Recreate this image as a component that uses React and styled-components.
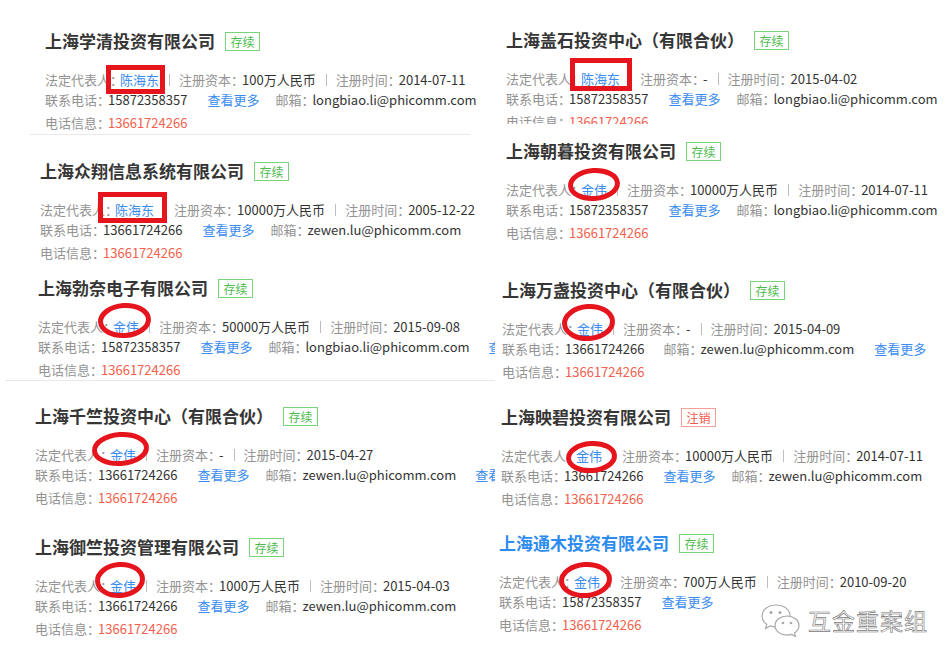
import React from "react";
import styled, { createGlobalStyle } from "styled-components";

const GlobalStyle = createGlobalStyle`
  body {
    margin: 0;
    background: #fff;
    font-family: "Noto Sans CJK SC", "Liberation Sans", sans-serif;
  }
`;

const Page = styled.div`
  position: relative;
  display: flex;
  width: 950px;
  height: 663px;
  overflow: hidden;
  background: #fff;
`;

const Column = styled.div`
  display: flex;
  flex-direction: column;
  width: ${(p) => p.$width}px;
  flex-shrink: 0;
  overflow: hidden;
`;

const Card = styled.div`
  margin-top: ${(p) => p.$top}px;
  padding-left: ${(p) => p.$x}px;
  height: ${(p) => p.$height || 104}px;
  overflow: hidden;
  flex-shrink: 0;
  white-space: nowrap;
`;

const Rule = styled.div`
  margin-top: ${(p) => p.$top}px;
  margin-left: ${(p) => p.$x}px;
  width: ${(p) => p.$w}px;
  height: 1px;
  background: #e9e9e9;
  flex-shrink: 0;
`;

const Header = styled.div`
  display: flex;
  align-items: center;
  height: 24px;
`;

const Title = styled.span`
  font-size: 17px;
  font-weight: 700;
  line-height: 24px;
  color: ${(p) => (p.$active ? "#2d8cf0" : "#363636")};
`;

const Badge = styled.span`
  margin-left: 10px;
  width: 35px;
  height: 19px;
  box-sizing: border-box;
  display: inline-flex;
  align-items: center;
  justify-content: center;
  font-size: 12px;
  color: ${(p) => (p.$closed ? "#f05a4a" : "#4cbb4c")};
  border: 1px solid ${(p) => (p.$closed ? "#f4a096" : "#78d478")};
`;

const Info = styled.div`
  margin-top: 17px;
  font-size: 13px;
  color: #333;
`;

const Row = styled.div`
  display: flex;
  align-items: center;
  height: 20px;
  line-height: 20px;
  margin-top: ${(p) => p.$gap || 0}px;
`;

const Label = styled.span`
  color: #939393;
`;

const Value = styled.span`
  margin-left: -2px;
  color: ${(p) => (p.$red ? "#f4604c" : "#333")};
`;

const Name = styled.span`
  position: relative;
  margin-left: -3px;
  color: #3b8cf0;
`;

const Sep = styled.span`
  display: inline-block;
  width: 1px;
  height: 12px;
  margin: 0 9px 0 10px;
  background: #bdbdbd;
`;

const More = styled.span`
  margin-left: ${(p) => p.$gap || 20}px;
  color: #3b8cf0;
`;

const Mail = styled.span`
  margin-left: ${(p) => p.$gap || 16}px;
`;

const Frame = styled.span`
  position: absolute;
  box-sizing: border-box;
  border: 5px solid #e5141d;
`;

const Ring = styled.svg`
  position: absolute;
  overflow: visible;
`;

const Watermark = styled.div`
  position: absolute;
  left: 760px;
  top: 603px;
  display: flex;
  align-items: center;
  gap: 6px;
`;

const WatermarkText = styled.span`
  font-size: 23px;
  letter-spacing: 1px;
  color: #fbfbfb;
  -webkit-text-stroke: 0.6px #7a7a7a;
`;

const Mark = ({ mark }) => {
  const [x, y, w, h] = mark.box;
  if (mark.type === "rect") {
    return <Frame style={{ left: x, top: y, width: w, height: h }} />;
  }
  return (
    <Ring
      style={{ left: x, top: y }}
      width={w}
      height={h}
      viewBox={`0 0 ${w} ${h}`}
    >
      <ellipse
        cx={w / 2}
        cy={h / 2}
        rx={w / 2 - 2.5}
        ry={h / 2 - 2.5}
        fill="none"
        stroke="#e5141d"
        strokeWidth="5"
        transform={`rotate(-4 ${w / 2} ${h / 2})`}
      />
    </Ring>
  );
};

const CompanyCard = ({ c }) => (
  <Card $top={c.top} $x={c.x} $height={c.height}>
    <Header>
      <Title $active={c.active}>{c.title}</Title>
      <Badge $closed={c.closed}>{c.closed ? "注销" : "存续"}</Badge>
    </Header>
    <Info>
      <Row>
        <Label>法定代表人：</Label>
        <Name>
          {c.person}
          <Mark mark={c.mark} />
        </Name>
        <Sep />
        <Label>注册资本：</Label>
        <Value>{c.capital}</Value>
        <Sep />
        <Label>注册时间：</Label>
        <Value>{c.date}</Value>
      </Row>
      <Row>
        <Label>联系电话：</Label>
        <Value>{c.phone}</Value>
        {c.order === "mail" ? (
          <>
            <Mail $gap={19}>
              <Label>邮箱：</Label>
              <Value>{c.email}</Value>
            </Mail>
            <More>查看更多</More>
          </>
        ) : (
          <>
            <More>查看更多</More>
            {c.email && (
              <Mail>
                <Label>邮箱：</Label>
                <Value>{c.email}</Value>
              </Mail>
            )}
            {c.extra && <More $gap={19}>查看更多</More>}
          </>
        )}
      </Row>
      <Row $gap={3}>
        <Label>电话信息：</Label>
        <Value $red>13661724266</Value>
      </Row>
    </Info>
  </Card>
);

const LONG = "longbiao.li@phicomm.com";
const ZEWEN = "zewen.lu@phicomm.com";

const left = [
  {
    top: 29, x: 45, title: "上海学清投资有限公司", person: "陈海东",
    mark: { type: "rect", box: [-14, -5, 59, 29] },
    capital: "100万人民币", date: "2014-07-11", phone: "15872358357", email: LONG,
  },
  {
    rule: { top: 1, x: 30, w: 440 },
    top: 24, x: 40, title: "上海众翔信息系统有限公司", person: "陈海东",
    mark: { type: "rect", box: [-17, -8, 69, 31] },
    capital: "10000万人民币", date: "2005-12-22", phone: "13661724266", email: ZEWEN,
  },
  {
    top: 13, x: 38, title: "上海勃奈电子有限公司", person: "金伟",
    mark: { type: "ring", box: [-15, -14, 53, 35] },
    capital: "50000万人民币", date: "2015-09-08", phone: "15872358357", email: LONG, extra: true,
  },
  {
    rule: { top: 0, x: 5, w: 490 },
    top: 23, x: 35, title: "上海千竺投资中心（有限合伙）", person: "金伟",
    mark: { type: "ring", box: [-18, -13, 57, 34] },
    capital: "-", date: "2015-04-27", phone: "13661724266", email: ZEWEN, extra: true,
  },
  {
    top: 27, x: 35, title: "上海御竺投资管理有限公司", person: "金伟",
    mark: { type: "ring", box: [-15, -14, 50, 36] },
    capital: "1000万人民币", date: "2015-04-03", phone: "13661724266", email: ZEWEN,
  },
];

const right = [
  {
    top: 28, x: 11, height: 96, title: "上海盖石投资中心（有限合伙）", person: "陈海东",
    mark: { type: "rect", box: [-11, -11, 62, 33] },
    capital: "-", date: "2015-04-02", phone: "15872358357", email: LONG,
  },
  {
    top: 15, x: 11, title: "上海朝暮投资有限公司", person: "金伟",
    mark: { type: "ring", box: [-13, -12, 52, 33] },
    capital: "10000万人民币", date: "2014-07-11", phone: "15872358357", email: LONG,
  },
  {
    top: 35, x: 7, title: "上海万盏投资中心（有限合伙）", person: "金伟",
    mark: { type: "ring", box: [-15, -15, 53, 37] },
    capital: "-", date: "2015-04-09", phone: "13661724266", email: ZEWEN, order: "mail",
  },
  {
    top: 23, x: 6, title: "上海映碧投资有限公司", person: "金伟", closed: true,
    mark: { type: "ring", box: [-10, -5, 51, 32] },
    capital: "10000万人民币", date: "2014-07-11", phone: "13661724266", email: ZEWEN,
  },
  {
    top: 22, x: 4, title: "上海通木投资有限公司", person: "金伟", active: true,
    mark: { type: "ring", box: [-15, -10, 53, 36] },
    capital: "700万人民币", date: "2010-09-20", phone: "15872358357",
  },
];

const renderColumn = (cards) =>
  cards.map((c) => (
    <React.Fragment key={c.title}>
      {c.rule && <Rule $top={c.rule.top} $x={c.rule.x} $w={c.rule.w} />}
      <CompanyCard c={c} />
    </React.Fragment>
  ));

const WeChatLogo = () => (
  <svg width="42" height="34" viewBox="0 0 42 34">
    <g fill="#fff" stroke="#a8a8a8" strokeWidth="1.2">
      <path d="M16 2C8 2 2 7 2 13c0 3.4 1.8 6.3 4.7 8.3L5.5 25.5l4.6-2.6c1.8.6 3.8.9 5.9.9 8 0 14-5 14-11S24 2 16 2z" />
      <path d="M27 13c-6.6 0-12 4.3-12 9.6s5.4 9.6 12 9.6c1.6 0 3.2-.3 4.6-.8l3.9 2.1-1-3.5c2.7-1.8 4.5-4.4 4.5-7.4 0-5.3-5.4-9.6-12-9.6z" />
    </g>
    <g fill="#a8a8a8">
      <circle cx="11" cy="9.5" r="1.5" />
      <circle cx="20" cy="9.5" r="1.5" />
      <circle cx="23" cy="20" r="1.3" />
      <circle cx="31" cy="20" r="1.3" />
    </g>
  </svg>
);

export default function App() {
  return (
    <>
      <GlobalStyle />
      <Page>
        <Column $width={495}>{renderColumn(left)}</Column>
        <Column $width={455}>{renderColumn(right)}</Column>
        <Watermark>
          <WeChatLogo />
          <WatermarkText>互金重案组</WatermarkText>
        </Watermark>
      </Page>
    </>
  );
}
